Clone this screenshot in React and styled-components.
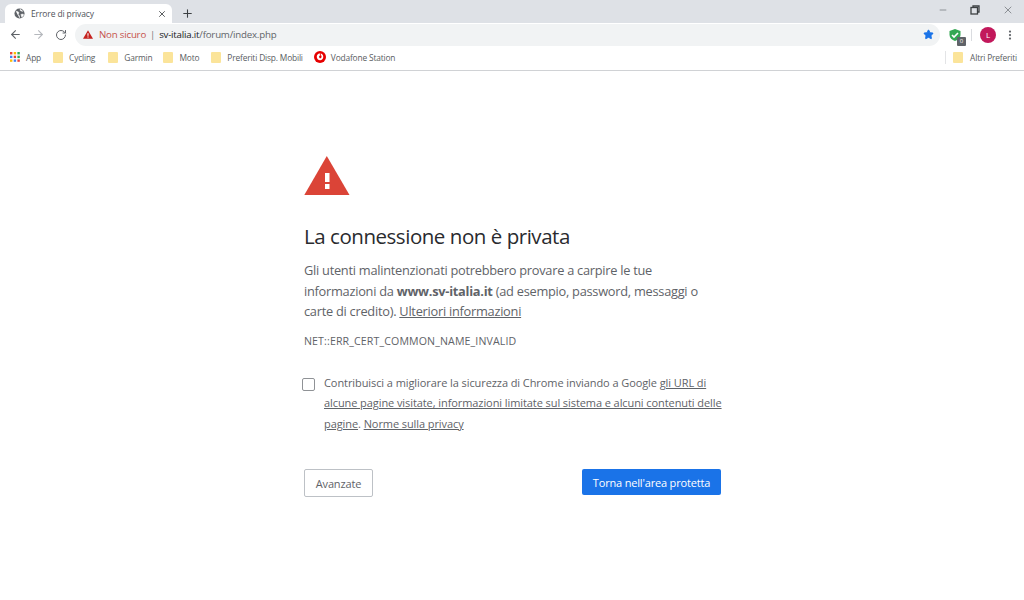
import React from 'react';
import styled, { createGlobalStyle } from 'styled-components';
import { ArrowLeft, ArrowRight, RotateCw, Plus, X, Minus, Star, EllipsisVertical } from 'lucide-react';

const Global = createGlobalStyle`
  html, body { margin: 0; padding: 0; background: #fff; }
  body { font-family: "Open Sans", "Noto Sans", sans-serif; width: 1024px; height: 600px; overflow: hidden; }
`;
const Page = styled.div`width:1024px;height:600px;display:flex;flex-direction:column;background:#fff;`;
const TabStrip = styled.div`height:23px;background:#dee1e6;display:flex;align-items:flex-end;padding-left:5px;`;
const Tab = styled.div`width:167px;height:19px;background:#fff;border-radius:6px 6px 0 0;display:flex;align-items:center;padding:0 5px 0 9px;box-sizing:border-box;gap:6px;`;
const TabTitle = styled.span`flex:1;font-size:8.5px;letter-spacing:-.12px;color:#50535a;white-space:nowrap;`;
const NewTab = styled.div`height:19px;margin-left:9px;display:flex;align-items:center;color:#3c4043;`;
const WinControls = styled.div`margin-left:auto;align-self:flex-start;display:flex;align-items:center;height:19px;padding-right:10px;gap:22px;color:#5f6368;`;
const Toolbar = styled.div`height:23px;display:flex;align-items:center;padding:0 8px 0 9px;background:#fff;`;
const Nav = styled.div`display:flex;align-items:center;gap:10px;margin-right:8px;`;
const NavIcon = styled.span`display:flex;color:${p=>p.$dim?'#b5b8bd':'#5f6368'};margin-left:${p=>p.$shift||0}px;`;
const Omnibox = styled.div`width:865px;height:22px;border-radius:11px;background:#f1f3f4;display:flex;align-items:center;padding:0 6px 0 8px;box-sizing:border-box;font-size:9.7px;letter-spacing:-.2px;`;
const Insecure = styled.span`color:#c5514a;margin-left:6px;`;
const Pipe = styled.span`color:#70757a;margin:0 4px 0 4px;`;
const Host = styled.span`color:#202124;`;
const Path = styled.span`color:#5f6368;`;
const Tools = styled.div`display:flex;align-items:center;margin-left:auto;`;
const Right = styled.div`display:flex;align-items:center;margin-left:8px;height:23px;`;
const Shield = styled.div`position:relative;width:14px;height:14px;display:flex;`;
const ShieldBadge = styled.span`position:absolute;right:-4px;bottom:-4px;width:9px;height:9px;background:#5f6368;color:#fff;font-size:6px;line-height:9px;text-align:center;border-radius:1px;`;
const Sep = styled.span`width:1px;height:12px;background:#dadce0;margin:0 8px 0 9px;`;
const Avatar = styled.span`width:16px;height:16px;border-radius:50%;background:#c2185b;color:#fff;font-size:8px;line-height:16px;text-align:center;`;
const More = styled.span`display:flex;margin-left:8px;color:#5f6368;`;
const Bookmarks = styled.div`height:25px;box-sizing:border-box;border-bottom:1px solid #d0d2d5;display:flex;align-items:center;padding:0 4px 2px 10px;font-size:8.4px;letter-spacing:-.17px;color:#5a5d62;background:#fff;`;
const Bookmark = styled.div`display:flex;align-items:center;gap:${p=>p.$gap||6}px;margin-right:${p=>p.$mr||12}px;white-space:nowrap;`;
const Folder = styled.span`width:10px;height:11px;background:#fbe49a;border-radius:1px;display:block;`;
const Far = styled.div`margin-left:auto;display:flex;align-items:center;gap:7px;padding-left:7px;border-left:1px solid #e3e4e6;height:13px;white-space:nowrap;padding-right:3px;`;
const Main = styled.main`flex:1;padding:85px 0 0 304px;color:#5f6368;`;
const Interstitial = styled.div`width:417px;`;
const WarnIcon = styled.div`display:flex;height:39px;`;
const Title = styled.h1`margin:28px 0 0;font-size:20.5px;line-height:26px;font-weight:400;color:#2a2b2e;letter-spacing:-.46px;white-space:nowrap;`;
const Text = styled.p`margin:11px 0 0;font-size:12.8px;line-height:20.5px;letter-spacing:-.26px;color:#5f6368;white-space:nowrap;strong{font-weight:700;}`;
const U = styled.span`text-decoration:underline;`;
const Code = styled.div`margin-top:11px;font-size:10.6px;line-height:16px;letter-spacing:.13px;color:#5f6368;`;
const Opt = styled.div`display:flex;margin-top:24px;margin-left:-2px;gap:9px;`;
const Box = styled.span`width:11px;height:11px;margin-top:5px;border:1px solid #8f9296;border-radius:2px;flex:none;`;
const OptText = styled.div`font-size:11px;line-height:20.5px;letter-spacing:-.08px;color:#5f6368;white-space:nowrap;`;
const Actions = styled.div`display:flex;justify-content:space-between;align-items:flex-start;margin-top:35px;`;
const Ghost = styled.div`width:67px;height:26px;border:1px solid #bdc1c6;border-radius:2px;font-size:11px;letter-spacing:-.15px;color:#5f6368;display:flex;align-items:center;justify-content:center;`;
const Primary = styled.div`width:139px;height:26px;background:#1a73e8;border-radius:2px;font-size:11px;letter-spacing:-.17px;color:#fff;display:flex;align-items:center;justify-content:center;`;

const Globe = () => <svg width="11" height="11" viewBox="0 0 24 24"><circle cx="12" cy="12" r="11" fill="#5f6368"/><path d="M4 7l5 1 2 3-2 2 1 3 2 1v5M14 2l-1 3 4 2 3 0M15 14l5-1 1 3-4 4z" fill="#fff" stroke="#fff" strokeWidth="1"/></svg>;
const Apps = () => {
  const c=['#ea4335','#fbbc04','#34a853','#4285f4','#ea4335','#34a853','#fbbc04','#4285f4','#ea4335'];
  return <svg width="10" height="10" viewBox="0 0 10 10">{c.map((f,i)=><rect key={i} x={(i%3)*3.7} y={Math.floor(i/3)*3.7} width="2.4" height="2.4" fill={f}/>)}</svg>;
};
const Vodafone = () => <svg width="12" height="12" viewBox="0 0 24 24"><circle cx="12" cy="12" r="12" fill="#e60000"/><path d="M13 5c3 .3 5.500 3 5.500 6.800 0 3.700-2.800 6.700-6.300 6.700-3.800 0-6.700-3-6.700-6.800 0-3.500 2.500-6.200 6-7-.2 1.800.3 3 1.500 4-1.600.300-2.800 1.500-2.800 3 0 1.800 1.100 3 2.400 3 1.500 0 2.500-1.300 2.500-3 0-2.500-1.500-3.500-2.100-6.700z" fill="#fff"/></svg>;
const Tri = () => <svg width="46" height="39" viewBox="0 0 46 39"><path d="M22.800 0L45.500 39H.3z" fill="#db4437"/><rect x="21" y="17" width="4.500" height="9" fill="#fff"/><rect x="21" y="28" width="4.500" height="5" fill="#fff"/></svg>;

export default function App(){
  return <Page><Global/>
    <TabStrip>
      <Tab><Globe/><TabTitle>Errore di privacy</TabTitle><X size={10} strokeWidth={2} color="#3c4043"/></Tab>
      <NewTab><Plus size={13} strokeWidth={2}/></NewTab>
      <WinControls><Minus size={10} strokeWidth={1.500}/>
        <svg width="10" height="10" viewBox="0 0 10 10" fill="none" stroke="#3c4043" strokeWidth="1.300"><rect x="1" y="2.500" width="6.500" height="6.500"/><path d="M3 2.500V1h6v6H7.500"/></svg>
        <X size={12} strokeWidth={1.300}/></WinControls>
    </TabStrip>
    <Toolbar>
      <Nav>
        <NavIcon><ArrowLeft size={13} strokeWidth={2}/></NavIcon>
        <NavIcon $dim><ArrowRight size={13} strokeWidth={2}/></NavIcon>
        <NavIcon><RotateCw size={12} strokeWidth={2}/></NavIcon>
      </Nav>
      <Omnibox>
        <svg width="10" height="9" viewBox="0 0 46 40"><path d="M23 0L46 40H0z" fill="#c5221f"/><rect x="20.500" y="14" width="5" height="12" fill="#fff"/><rect x="20.500" y="29" width="5" height="5" fill="#fff"/></svg>
        <Insecure>Non sicuro</Insecure><Pipe>|</Pipe><Host>sv-italia.it</Host><Path>/forum/index.php</Path>
        <Tools><Star size={11} fill="#1a73e8" color="#1a73e8"/></Tools>
      </Omnibox>
      <Right>
        <Shield>
          <svg width="14" height="14" viewBox="0 0 14 14"><path d="M7 1l5.500 2v4c0 3-2.500 5-5.500 6-3-1-5.500-3-5.500-6V3z" fill="#34a853"/><path d="M4 7l2 2 4-4" stroke="#fff" strokeWidth="1.600" fill="none"/></svg>
          <ShieldBadge>0</ShieldBadge>
        </Shield>
        <Sep/>
        <Avatar>L</Avatar>
        <More><EllipsisVertical size={12} strokeWidth={2.500}/></More>
      </Right>
    </Toolbar>
    <Bookmarks>
      <Bookmark $gap={6} $mr={12}><Apps/>App</Bookmark>
      <Bookmark $mr={13}><Folder/>Cycling</Bookmark>
      <Bookmark $mr={11}><Folder/>Garmin</Bookmark>
      <Bookmark><Folder/>Moto</Bookmark>
      <Bookmark $mr={11}><Folder/>Preferiti Disp. Mobili</Bookmark>
      <Bookmark $gap={5}><Vodafone/>Vodafone Station</Bookmark>
      <Far><Folder/>Altri Preferiti</Far>
    </Bookmarks>
    <Main><Interstitial>
      <WarnIcon><Tri/></WarnIcon>
      <Title>La connessione non è privata</Title>
      <Text>Gli utenti malintenzionati potrebbero provare a carpire le tue<br/>informazioni da <strong>www.sv-italia.it</strong> (ad esempio, password, messaggi o<br/>carte di credito). <U>Ulteriori informazioni</U></Text>
      <Code>NET::ERR_CERT_COMMON_NAME_INVALID</Code>
      <Opt><Box/><OptText>Contribuisci a migliorare la sicurezza di Chrome inviando a Google <U>gli URL di<br/>alcune pagine visitate, informazioni limitate sul sistema e alcuni contenuti delle<br/>pagine</U>. <U>Norme sulla privacy</U></OptText></Opt>
      <Actions><Ghost>Avanzate</Ghost><Primary>Torna nell'area protetta</Primary></Actions>
    </Interstitial></Main>
  </Page>;
}
